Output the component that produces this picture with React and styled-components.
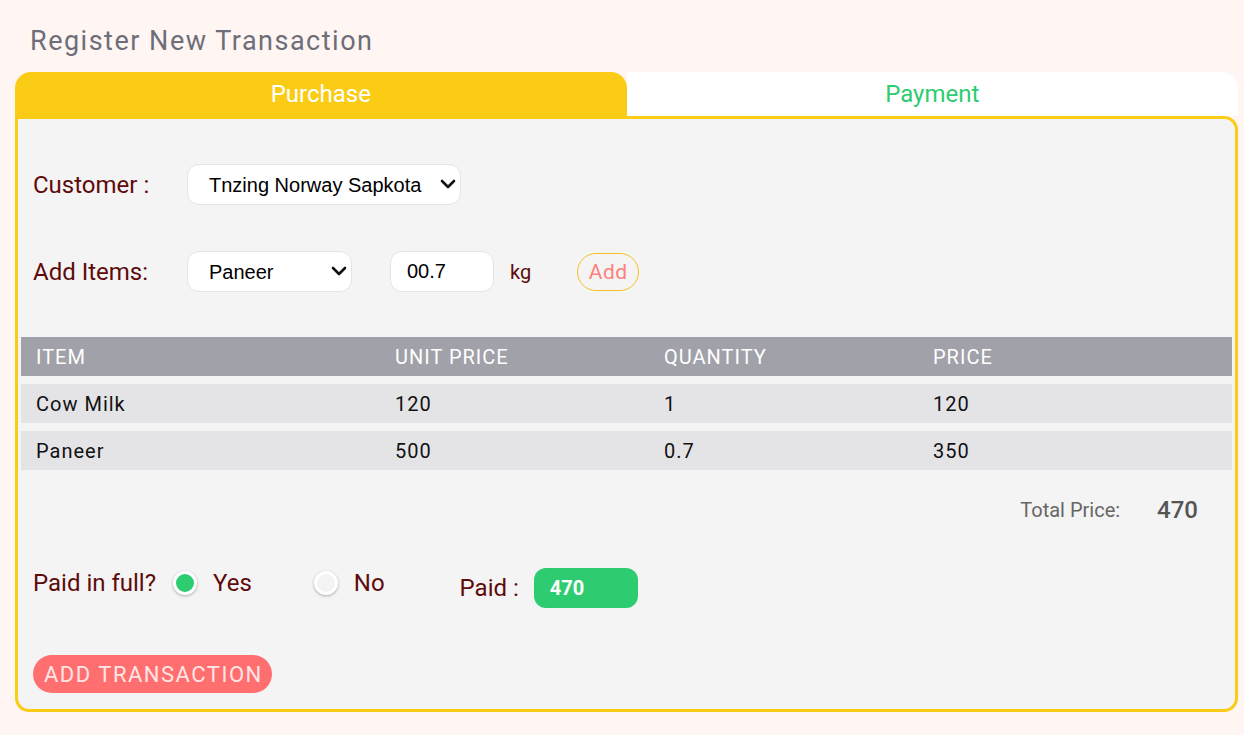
import React, { useState } from "react";
import styled, { createGlobalStyle } from "styled-components";
import { ChevronDown } from "lucide-react";

const GlobalStyle = createGlobalStyle`
  html, body {
    margin: 0;
    padding: 0;
    background: #fff5f3;
    font-family: Roboto, "Liberation Sans", sans-serif;
  }
`;

const items = [
  { name: "Cow Milk", unit: 120, qty: 1, price: 120 },
  { name: "Paneer", unit: 500, qty: 0.7, price: 350 },
];

const Dropdown = ({ width, value, options }) => (
  <SelectWrap>
    <Select $width={width} defaultValue={value}>
      {options.map((o) => (
        <option key={o.value} value={o.value}>
          {o.label}
        </option>
      ))}
    </Select>
    <Arrow size={24} strokeWidth={2.6} />
  </SelectWrap>
);

const App = () => {
  const [paidFull, setPaidFull] = useState(true);

  return (
    <Page>
      <GlobalStyle />
      <Title>Register New Transaction</Title>

      <Tabs>
        <Tab $active>Purchase</Tab>
        <Tab>Payment</Tab>
      </Tabs>

      <Panel>
        <FormRow>
          <Label>Customer :</Label>
          <Dropdown
            width="274px"
            value="tnzing"
            options={[{ value: "tnzing", label: "Tnzing Norway Sapkota" }]}
          />
        </FormRow>

        <FormRow $gap="46px">
          <Label>Add Items:</Label>
          <Dropdown
            width="165px"
            value="paneer"
            options={[
              { value: "paneer", label: "Paneer" },
              { value: "milk", label: "Cow Milk" },
            ]}
          />
          <QtyInput defaultValue="00.7" />
          <Unit>kg</Unit>
          <AddButton>Add</AddButton>
        </FormRow>

        <Table>
          <HeadRow>
            <span>Item</span>
            <span>Unit Price</span>
            <span>Quantity</span>
            <span>Price</span>
          </HeadRow>
          {items.map((it) => (
            <BodyRow key={it.name}>
              <span>{it.name}</span>
              <span>{it.unit}</span>
              <span>{it.qty}</span>
              <span>{it.price}</span>
            </BodyRow>
          ))}
        </Table>

        <TotalRow>
          <TotalLabel>Total Price:</TotalLabel>
          <TotalValue>470</TotalValue>
        </TotalRow>

        <PaidRow>
          <RadioGroup>
            <Label as="span">Paid in full?</Label>
            <Choice>
              <Radio type="radio" checked={paidFull} onChange={() => setPaidFull(true)} />
              Yes
            </Choice>
            <Choice>
              <Radio type="radio" checked={!paidFull} onChange={() => setPaidFull(false)} />
              No
            </Choice>
          </RadioGroup>
          <PaidGroup>
            <Label as="span">Paid :</Label>
            <PaidBox>470</PaidBox>
          </PaidGroup>
        </PaidRow>

        <SubmitButton>ADD TRANSACTION</SubmitButton>
      </Panel>
    </Page>
  );
};

const Page = styled.div`
  padding: 25px 6px 23px 15px;
  min-height: 735px;
  box-sizing: border-box;
`;

const Title = styled.h2`
  margin: 0 0 15px 15px;
  font-size: 27px;
  line-height: 32px;
  font-weight: 400;
  letter-spacing: 1.5px;
  color: #6e6e78;
`;

const Tabs = styled.div`
  display: flex;
`;

const Tab = styled.div`
  flex: 1;
  height: 44px;
  display: flex;
  align-items: center;
  justify-content: center;
  font-size: 24px;
  background: ${(p) => (p.$active ? "#facc15" : "#ffffff")};
  color: ${(p) => (p.$active ? "#ffffff" : "#2ecc71")};
  border-radius: ${(p) => (p.$active ? "16px 16px 0 0" : "0 16px 0 0")};
`;

const Panel = styled.div`
  background: #f4f4f4;
  border: 3px solid #facc15;
  border-radius: 0 14px 14px 14px;
  padding: 45px 3px 16px;
  display: flex;
  flex-direction: column;
  align-items: flex-start;
`;

const FormRow = styled.div`
  display: flex;
  align-items: center;
  padding-left: 12px;
  margin-top: ${(p) => p.$gap || "0"};
  height: 41px;
`;

const Label = styled.label`
  width: 154px;
  font-size: 24px;
  color: #5e0b0b;
  flex-shrink: 0;
`;

const SelectWrap = styled.div`
  position: relative;
  display: inline-flex;
`;

const Select = styled.select`
  appearance: none;
  width: ${(p) => p.$width};
  height: 41px;
  padding: 0 30px 0 21px;
  border: 1px solid #e4e4e4;
  border-radius: 12px;
  background: #ffffff;
  font-family: "Liberation Sans", Arial, sans-serif;
  font-size: 20px;
  color: #000;
  outline: none;
`;

const Arrow = styled(ChevronDown)`
  position: absolute;
  right: 1px;
  top: 8px;
  color: #111;
  pointer-events: none;
`;

const QtyInput = styled.input`
  width: 104px;
  height: 41px;
  box-sizing: border-box;
  margin-left: 38px;
  padding: 0 0 0 16px;
  border: 1px solid #e4e4e4;
  border-radius: 12px;
  background: #ffffff;
  font-family: "Liberation Sans", Arial, sans-serif;
  font-size: 20px;
  color: #000;
  outline: none;
`;

const Unit = styled.span`
  margin-left: 16px;
  font-size: 20px;
  color: #5e0b0b;
`;

const AddButton = styled.button`
  margin-left: 46px;
  width: 62px;
  height: 38px;
  border: 1px solid #fbbf24;
  border-radius: 20px;
  background: transparent;
  color: #ff7f7f;
  font-family: Roboto, sans-serif;
  font-size: 21px;
  letter-spacing: 0.5px;
  padding: 0;
`;

const Table = styled.div`
  align-self: stretch;
  margin-top: 45px;
  display: flex;
  flex-direction: column;
  gap: 8px;
`;

const GridRow = styled.div`
  display: grid;
  grid-template-columns: 359px 269px 269px 1fr;
  height: 39px;
  align-items: center;
  font-size: 20px;
  letter-spacing: 1px;

  span {
    padding-left: 15px;
  }
`;

const HeadRow = styled(GridRow)`
  background: #a1a1aa;
  color: #ffffff;
  text-transform: uppercase;
`;

const BodyRow = styled(GridRow)`
  background: #e4e4e7;
  color: #111111;
`;

const TotalRow = styled.div`
  align-self: flex-end;
  display: flex;
  align-items: center;
  height: 30px;
  margin: 25px 34px 0 0;
  gap: 37px;
`;

const TotalLabel = styled.span`
  font-size: 20px;
  color: #666666;
`;

const TotalValue = styled.span`
  font-size: 24px;
  font-weight: 500;
  color: #555555;
`;

const PaidRow = styled.div`
  display: flex;
  align-items: flex-start;
  margin-top: 43px;
  padding-left: 12px;
`;

const RadioGroup = styled.div`
  display: flex;
  align-items: center;
  height: 30px;

  ${Label} {
    width: auto;
    margin-right: 17px;
  }
`;

const Choice = styled.label`
  display: flex;
  align-items: center;
  gap: 16px;
  font-size: 24px;
  color: #5e0b0b;
  & + & {
    margin-left: 62px;
  }
`;

const Radio = styled.input`
  appearance: none;
  margin: 0;
  width: 24px;
  height: 24px;
  box-sizing: border-box;
  border-radius: 50%;
  border: 3px solid #ffffff;
  background: #f3f3f3;
  box-shadow: 0 1px 3px rgba(0, 0, 0, 0.3);
  &:checked {
    background: #2ecc71;
  }
`;

const PaidGroup = styled.div`
  display: flex;
  align-items: center;
  height: 40px;
  margin-left: 75px;
  gap: 15px;

  ${Label} {
    width: auto;
  }
`;

const PaidBox = styled.div`
  width: 104px;
  height: 40px;
  box-sizing: border-box;
  padding-left: 16px;
  display: flex;
  align-items: center;
  background: #2ecc71;
  border-radius: 12px;
  color: #ffffff;
  font-size: 20px;
  font-weight: 700;
`;

const SubmitButton = styled.button`
  margin: 47px 0 0 12px;
  height: 38px;
  padding: 0 9px 0 11px;
  border: none;
  border-radius: 20px;
  background: #ff6f6f;
  color: #ffe6e6;
  font-family: Roboto, sans-serif;
  font-size: 22px;
  letter-spacing: 1.5px;
`;

export default App;
